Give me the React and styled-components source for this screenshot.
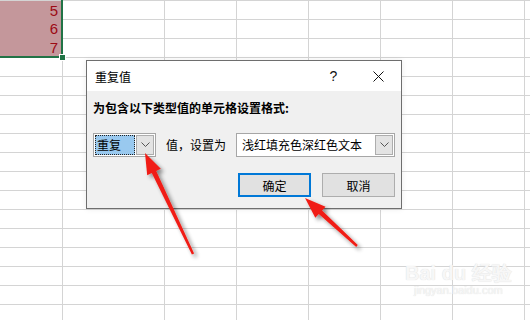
import React from "react";
import styled, { createGlobalStyle } from "styled-components";

const Global = createGlobalStyle`
  html, body { margin: 0; padding: 0; background: #fff; }
  body { width: 530px; height: 320px; overflow: hidden; font-family: "Noto Sans CJK SC", "Noto Sans", sans-serif; }
`;

const Page = styled.div`
  position: relative;
  width: 530px;
  height: 320px;
  overflow: hidden;
  background: #fff;
`;

const Sheet = styled.div`
  display: grid;
  grid-template-columns: 62px 102px repeat(6, 72px);
  grid-auto-rows: 19px;
`;

const Cell = styled.div`
  box-sizing: border-box;
  border-top: ${(p) => (p.$fill && !p.$first ? "none" : "1px solid #d4d4d4")};
  border-left: ${(p) => (p.$col0 ? "none" : "1px solid #d4d4d4")};
  background: ${(p) => (p.$fill ? "#c4979b" : "#fff")};
  color: #9c0a14;
  font-family: "Liberation Sans", Arial, sans-serif;
  font-size: 15px;
  line-height: 19px;
  text-align: right;
  padding-right: 4px;
`;

const Selection = styled.div`
  position: absolute;
  left: -2px;
  top: -2px;
  width: 65px;
  height: 60px;
  box-sizing: border-box;
  border: 2px solid #217346;
  pointer-events: none;
`;

const Handle = styled.div`
  position: absolute;
  left: 59px;
  top: 54px;
  width: 7px;
  height: 7px;
  box-sizing: border-box;
  background: #217346;
  border: 1px solid #fff;
`;

const Dialog = styled.div`
  position: absolute;
  left: 86px;
  top: 60px;
  width: 316px;
  height: 149px;
  box-sizing: border-box;
  border: 1px solid #6e6e6e;
  background: #f0f0f0;
  display: flex;
  flex-direction: column;
  box-shadow: 0 0 6px rgba(0, 0, 0, 0.08);
`;

const TitleBar = styled.div`
  height: 30px;
  background: #fff;
  display: flex;
  align-items: center;
  padding-left: 8px;
  font-size: 12px;
  color: #000;
`;

const Title = styled.div`
  flex: 1;
`;

const TitleButton = styled.div`
  width: 45px;
  height: 30px;
  display: flex;
  align-items: center;
  justify-content: center;
  font-family: "Liberation Sans", Arial, sans-serif;
  font-size: 14px;
  color: #111;
`;

const Body = styled.div`
  flex: 1;
  padding: 9px 6px 0 6px;
  display: flex;
  flex-direction: column;
`;

const Label = styled.div`
  font-size: 12px;
  font-weight: bold;
  line-height: 16px;
  color: #000;
  white-space: nowrap;
`;

const ComboRow = styled.div`
  margin-top: 17px;
  display: flex;
  align-items: center;
  gap: 10px;
`;

const Combo = styled.div`
  box-sizing: border-box;
  flex-shrink: 0;
  width: ${(p) => p.$w}px;
  height: 24px;
  border: 1px solid #a6a6a6;
  background: #fff;
  display: flex;
  align-items: center;
  padding: 1px;
  gap: 1px;
`;

const ComboText = styled.div`
  flex: 1;
  height: 100%;
  box-sizing: border-box;
  font-size: 12px;
  line-height: 18px;
  padding-left: ${(p) => (p.$selected ? 1 : 3)}px;
  color: #000;
  background: ${(p) => (p.$selected ? "#99c9ef" : "transparent")};
  border: ${(p) => (p.$selected ? "1px dotted #222" : "1px solid transparent")};
  white-space: nowrap;
`;

const DropButton = styled.div`
  box-sizing: border-box;
  width: 18px;
  height: 20px;
  background: #e3e3e3;
  border: 1px solid #adadad;
  display: flex;
  align-items: center;
  justify-content: center;
`;

const Text = styled.div`
  flex-shrink: 0;
  font-size: 12px;
  color: #000;
  line-height: 16px;
  white-space: nowrap;
`;

const ButtonRow = styled.div`
  margin-top: 16px;
  display: flex;
  justify-content: flex-end;
  gap: 11px;
`;

const Button = styled.div`
  box-sizing: border-box;
  width: 73px;
  height: 24px;
  background: #e1e1e1;
  border: ${(p) => (p.$primary ? "2px solid #0078d7" : "1px solid #adadad")};
  display: flex;
  align-items: center;
  justify-content: center;
  font-size: 12px;
  color: #000;
`;

const Overlay = styled.svg`
  position: absolute;
  left: 0;
  top: 0;
  width: 530px;
  height: 320px;
  pointer-events: none;
`;

const Watermark = styled.div`
  position: absolute;
  left: 405px;
  top: 262px;
  display: flex;
  flex-direction: column;
  align-items: center;
  color: #f7f7f7;
  text-shadow: 0 0 1px #d4d4d4;
  pointer-events: none;
`;

const WmBig = styled.div`
  font-family: "Liberation Sans", Arial, sans-serif;
  font-weight: bold;
  font-size: 20px;
  line-height: 22px;
`;

const WmSmall = styled.div`
  font-family: "Liberation Sans", Arial, sans-serif;
  font-size: 11px;
  line-height: 13px;
`;

const Chevron = () => (
  <svg width="9" height="6" viewBox="0 0 9 6">
    <polyline points="0.5,0.5 4.5,4.5 8.5,0.5" fill="none" stroke="#555" strokeWidth="1" />
  </svg>
);

const CloseIcon = () => (
  <svg width="11" height="11" viewBox="0 0 11 11">
    <line x1="0.5" y1="0.5" x2="10.5" y2="10.5" stroke="#111" strokeWidth="1" />
    <line x1="10.5" y1="0.5" x2="0.5" y2="10.5" stroke="#111" strokeWidth="1" />
  </svg>
);

function arrowPoints(tail, tip, headLen = 21, headHalf = 7.5, wHead = 2.4, wTail = 1.2) {
  const dx = tip[0] - tail[0];
  const dy = tip[1] - tail[1];
  const len = Math.hypot(dx, dy);
  const ux = dx / len;
  const uy = dy / len;
  const px = -uy;
  const py = ux;
  const bx = tip[0] - ux * headLen;
  const by = tip[1] - uy * headLen;
  const pts = [
    [tail[0] + px * wTail, tail[1] + py * wTail],
    [bx + px * wHead, by + py * wHead],
    [bx + px * headHalf, by + py * headHalf],
    tip,
    [bx - px * headHalf, by - py * headHalf],
    [bx - px * wHead, by - py * wHead],
    [tail[0] - px * wTail, tail[1] - py * wTail],
  ];
  return pts.map((p) => p.map((v) => v.toFixed(1)).join(",")).join(" ");
}

const numbers = ["5", "6", "7"];

export default function App() {
  const rows = 17;
  const cols = 8;
  const cells = [];
  for (let r = 0; r < rows; r++) {
    for (let c = 0; c < cols; c++) {
      const fill = c === 0 && r < 3;
      cells.push(
        <Cell key={`${r}-${c}`} $col0={c === 0} $fill={fill} $first={r === 0}>
          {fill ? numbers[r] : null}
        </Cell>
      );
    }
  }
  return (
    <Page>
      <Global />
      <Sheet>{cells}</Sheet>
      <Selection />
      <Handle />
      <Watermark>
        <WmBig>Bai du 经验</WmBig>
        <WmSmall>jingyan.baidu.com</WmSmall>
      </Watermark>
      <Dialog>
        <TitleBar>
          <Title>重复值</Title>
          <TitleButton>?</TitleButton>
          <TitleButton>
            <CloseIcon />
          </TitleButton>
        </TitleBar>
        <Body>
          <Label>为包含以下类型值的单元格设置格式:</Label>
          <ComboRow>
            <Combo $w={63}>
              <ComboText $selected>重复</ComboText>
              <DropButton>
                <Chevron />
              </DropButton>
            </Combo>
            <Text>值，设置为</Text>
            <Combo $w={159}>
              <ComboText>浅红填充色深红色文本</ComboText>
              <DropButton>
                <Chevron />
              </DropButton>
            </Combo>
          </ComboRow>
          <ButtonRow>
            <Button $primary>确定</Button>
            <Button>取消</Button>
          </ButtonRow>
        </Body>
      </Dialog>
      <Overlay viewBox="0 0 530 320">
        <defs>
          <filter id="sh" x="-50%" y="-50%" width="200%" height="200%">
            <feGaussianBlur in="SourceAlpha" stdDeviation="2.2" />
            <feOffset dx="3" dy="3" result="b" />
            <feComponentTransfer>
              <feFuncA type="linear" slope="0.45" />
            </feComponentTransfer>
            <feMerge>
              <feMergeNode />
              <feMergeNode in="SourceGraphic" />
            </feMerge>
          </filter>
        </defs>
        <polygon points={arrowPoints([193, 254], [145, 153])} fill="#f01e14" filter="url(#sh)" />
        <polygon points={arrowPoints([357, 246], [305, 198])} fill="#f01e14" filter="url(#sh)" />
      </Overlay>
    </Page>
  );
}
